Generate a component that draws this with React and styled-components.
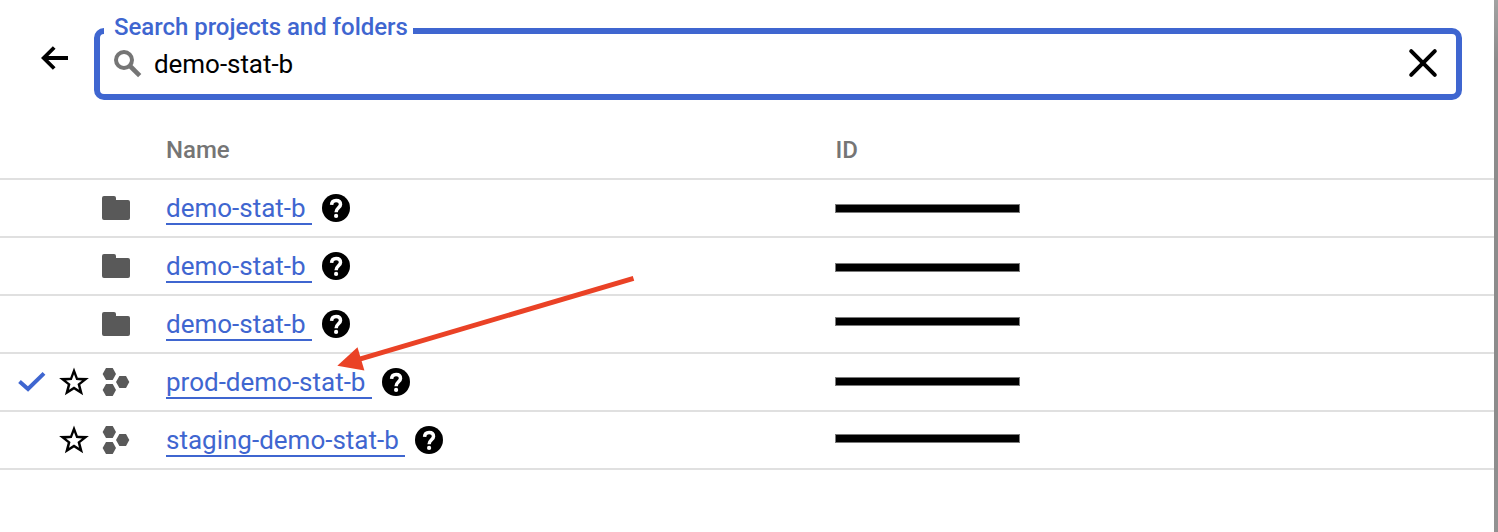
import React from "react";
import styled, { createGlobalStyle } from "styled-components";

const BLUE = "#3f66d0";
const LINE = "#e0e0e0";

const GlobalStyle = createGlobalStyle`
  * { box-sizing: border-box; }
  body { margin: 0; background: #fff; font-family: Roboto, sans-serif; overflow: hidden; }
`;

const Page = styled.div`
  display: flex;
  height: 532px;
  width: 1498px;
  background: #fff;
  position: relative;
`;

const Panel = styled.main`
  flex: 1;
  min-width: 0;
`;

const Edge = styled.div`
  width: 4px;
  background: linear-gradient(#a2a2a2, #8c8c8c 60px, #8c8c8c 440px, #929292);
`;

const SearchBar = styled.header`
  display: flex;
  padding: 28px 32px 0 40px;
  height: 122px;
`;

const BackButton = styled.button`
  width: 54px;
  height: 60px;
  padding: 0;
  border: 0;
  background: none;
  display: flex;
  align-items: center;
`;

const Field = styled.label`
  position: relative;
  flex: 1;
  height: 72px;
  border: 6px solid ${BLUE};
  border-radius: 10px;
  display: flex;
  align-items: center;
  padding: 0 16px 0 14px;
`;

const FieldLabel = styled.span`
  position: absolute;
  left: 4px;
  top: -21px;
  width: 309px;
  height: 28px;
  padding-left: 10px;
  background: #fff;
  color: ${BLUE};
  font-size: 24px;
  font-weight: 500;
  line-height: 28px;
  letter-spacing: -0.03px;
  white-space: nowrap;
`;

const Query = styled.span`
  flex: 1;
  margin-left: 12px;
  font-size: 26px;
  line-height: 32px;
  letter-spacing: -0.05px;
  color: #000;
`;

const Svg = styled.svg`
  display: block;
  flex: none;
`;

const HeaderRow = styled.div`
  display: grid;
  grid-template-columns: 166px 669.5px 1fr;
  height: 58px;
  border-bottom: 2px solid ${LINE};
  line-height: 56px;
  font-size: 24px;
  font-weight: 500;
  color: #757575;
`;

const Row = styled.div`
  display: grid;
  grid-template-columns: 60px 42px 64px 669px 1fr;
  height: 58px;
  border-bottom: 2px solid ${LINE};
  align-items: center;
`;

const IconCell = styled.div`
  padding-left: ${(p) => p.$inset || 0}px;
`;

const NameCell = styled.div`
  display: flex;
  align-items: center;
  gap: 10px;
`;

const NameLink = styled.a`
  width: ${(p) => p.$width}px;
  height: 33px;
  margin-top: 1px;
  border-bottom: 2px solid ${BLUE};
  color: ${BLUE};
  font-size: 26px;
  line-height: 33px;
  white-space: pre;
`;

const IdCell = styled.div`
  align-self: start;
  padding-top: ${(p) => p.$top}px;
`;

const Redaction = styled.div`
  width: 185px;
  height: 9px;
  background: #000;
  border: 1px solid #7a7a7a;
`;

const Pointer = styled.svg`
  position: absolute;
  left: 330px;
  top: 270px;
  pointer-events: none;
`;

const BackIcon = () => (
  <Svg width="30" height="28" viewBox="0 0 30 28" fill="none" stroke="#000" strokeWidth="3.8">
    <path d="M28 14H4M14.2 3.5L3.7 14L14.2 24.5" />
  </Svg>
);

const SearchIcon = () => (
  <Svg width="28" height="28" viewBox="0 0 28 28" fill="none" stroke="#757575" strokeWidth="4">
    <circle cx="10" cy="10" r="8" />
    <path d="M15.5 15.5L25.7 25.7" strokeWidth="4.6" />
  </Svg>
);

const CloseIcon = () => (
  <Svg width="34" height="36" viewBox="0 0 34 36" stroke="#000" strokeWidth="4" strokeLinecap="round">
    <path d="M5.2 5.2L28.8 28.8M28.8 5.2L5.2 28.8" />
  </Svg>
);

const FolderIcon = () => (
  <Svg width="28" height="24" viewBox="0 0 28 24" fill="#595959">
    <path d="M2 0H12Q14 0 14 2V4H26Q28 4 28 6V22Q28 24 26 24H2Q0 24 0 22V2Q0 0 2 0Z" />
  </Svg>
);

const ProjectIcon = () => (
  <Svg width="28" height="28" viewBox="0 0 28 28" fill="#595959">
    <path d="M4 0H10.7L14 6L10.7 12H4L.6 6Z" />
    <path d="M4 16H10.7L14 22L10.7 28H4L.6 22Z" />
    <path d="M17.4 8H24L27.3 14L24 20H17.4L14 14Z" />
  </Svg>
);

const StarIcon = () => (
  <Svg width="29" height="28" viewBox="0.5 0 29 28" overflow="visible">
    <path
      fillRule="evenodd"
      d="M14.5 -.4L18.3 9.7L29.4 10L20.8 16.8L23.6 27.2L14.5 21.5L5.4 27.2L8.2 16.8L-.4 10L10.7 9.7ZM14.5 6.2L12.3 12.1L6.5 12.4L11 16L9.5 21.7L14.5 18.5L19.5 21.7L18 16L22.5 12.4L16.7 12.1Z"
    />
  </Svg>
);

const CheckIcon = () => (
  <Svg width="28" height="22" viewBox="0 0 28 22" fill="none" stroke={BLUE} strokeWidth="4">
    <path d="M1.5 10.6L10 18L26 2.4" />
  </Svg>
);

const HelpIcon = () => (
  <Svg width="28" height="28" viewBox="0 0 28 28">
    <circle cx="14" cy="14" r="14" />
    <path
      d="M9.6 10.9C9.7 8.1 11.5 6.5 14.1 6.5C16.8 6.5 18.5 8.1 18.5 10.5C18.5 13.7 14.1 14 14.1 18.2"
      fill="none"
      stroke="#fff"
      strokeWidth="3.5"
    />
    <circle cx="14.1" cy="21.9" r="2.1" fill="#fff" />
  </Svg>
);

const items = [
  { name: "demo-stat-b", width: 146, barTop: 24 },
  { name: "demo-stat-b", width: 146, barTop: 25 },
  { name: "demo-stat-b", width: 146, barTop: 21 },
  { name: "prod-demo-stat-b", width: 206, barTop: 23, project: true, selected: true },
  { name: "staging-demo-stat-b", width: 239, barTop: 22, project: true },
];

export default function App() {
  return (
    <Page>
      <GlobalStyle />
      <Panel>
        <SearchBar>
          <BackButton aria-label="Back"><BackIcon /></BackButton>
          <Field>
            <FieldLabel>Search projects and folders</FieldLabel>
            <SearchIcon />
            <Query>demo-stat-b</Query>
            <CloseIcon />
          </Field>
        </SearchBar>
        <HeaderRow>
          <span />
          <span>Name</span>
          <span>ID</span>
        </HeaderRow>
        {items.map((item, i) => (
          <Row key={i}>
            <IconCell $inset={18}>{item.selected && <CheckIcon />}</IconCell>
            <IconCell>{item.project && <StarIcon />}</IconCell>
            <IconCell>{item.project ? <ProjectIcon /> : <FolderIcon />}</IconCell>
            <NameCell>
              <NameLink $width={item.width}>{item.name}</NameLink>
              <HelpIcon />
            </NameCell>
            <IdCell $top={item.barTop}><Redaction /></IdCell>
          </Row>
        ))}
      </Panel>
      <Edge />
      <Pointer width="310" height="110" viewBox="330 270 310 110">
        <path d="M633.5 278.3L358 359.6" stroke="#ea4226" strokeWidth="5" />
        <path d="M337.3 365.7L357.5 347.2L364.4 370.6Z" fill="#ea4226" />
      </Pointer>
    </Page>
  );
}
